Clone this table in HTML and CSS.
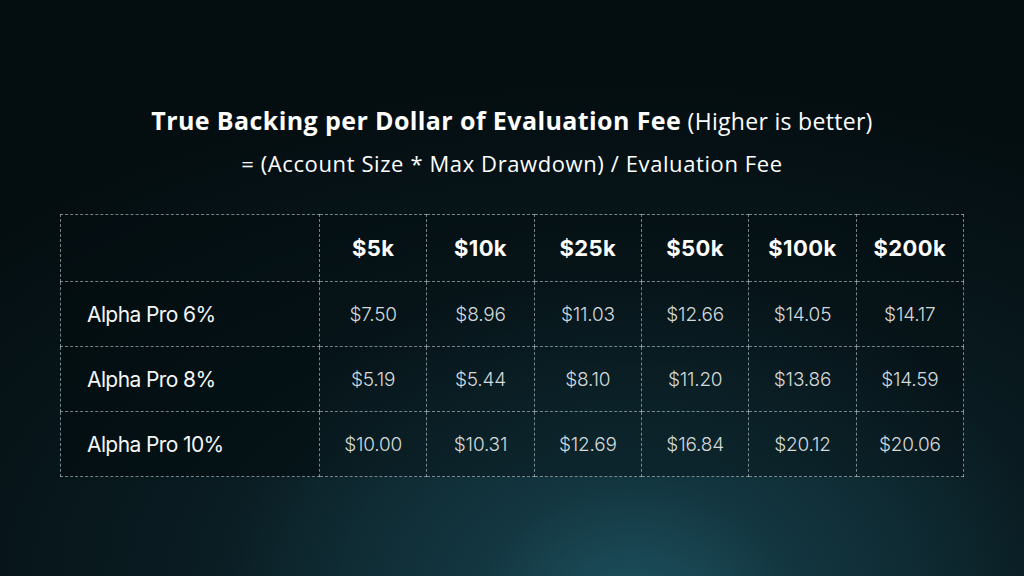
FILE: index.html
```html
<!DOCTYPE html>
<html lang="en">
<head>
<meta charset="utf-8">
<title>True Backing per Dollar of Evaluation Fee</title>
<link rel="stylesheet" href="styles.css">
</head>
<body>
<main class="page">
  <header class="heading">
    <h1 class="title"><strong>True Backing per Dollar of Evaluation Fee</strong> <span class="note">(Higher is better)</span></h1>
    <p class="formula">= (Account Size * Max Drawdown) / Evaluation Fee</p>
  </header>
  <table class="grid">
    <thead>
      <tr>
        <th class="corner"></th>
        <th>$5k</th><th>$10k</th><th>$25k</th><th>$50k</th><th>$100k</th><th>$200k</th>
      </tr>
    </thead>
    <tbody>
      <tr>
        <th class="rowname">Alpha Pro 6%</th>
        <td>$7.50</td><td>$8.96</td><td>$11.03</td><td>$12.66</td><td>$14.05</td><td>$14.17</td>
      </tr>
      <tr>
        <th class="rowname">Alpha Pro 8%</th>
        <td>$5.19</td><td>$5.44</td><td>$8.10</td><td>$11.20</td><td>$13.86</td><td>$14.59</td>
      </tr>
      <tr>
        <th class="rowname">Alpha Pro 10%</th>
        <td>$10.00</td><td>$10.31</td><td>$12.69</td><td>$16.84</td><td>$20.12</td><td>$20.06</td>
      </tr>
    </tbody>
  </table>
</main>
</body>
</html>
```

FILE: styles.css
```css
html, body {
  margin: 0;
  padding: 0;
  height: 100%;
}

body {
  width: 1024px;
  height: 576px;
  overflow: hidden;
  color: #ffffff;
  font-family: "Open Sans", "Lato", sans-serif;
  background-color: #050f12;
  background-image:
    radial-gradient(ellipse 420px 360px at 62% 108%, rgba(31, 90, 104, 0.85) 0%, rgba(22, 64, 76, 0.55) 40%, rgba(10, 30, 36, 0) 100%),
    radial-gradient(ellipse 900px 520px at 60% 100%, #123039 0%, #0a1d23 45%, #061317 75%, #040d10 100%);
}

.page {
  display: flex;
  flex-direction: column;
  align-items: center;
  padding-top: 103px;
}

.heading {
  text-align: center;
}

.title {
  margin: 0;
  font-size: 25px;
  line-height: 34px;
  font-weight: 400;
}

.title strong {
  font-weight: 700;
  letter-spacing: 0.4px;
}

.note {
  font-size: 23px;
  font-weight: 400;
  letter-spacing: 0.3px;
}

.formula {
  margin: 10px 0 0;
  font-size: 22px;
  line-height: 30px;
  font-weight: 400;
  letter-spacing: 0.6px;
}

.grid {
  margin-top: 36px;
  width: 904px;
  border-collapse: collapse;
  table-layout: fixed;
  font-family: "Inter", sans-serif;
}

.grid th,
.grid td {
  border: 1px dashed rgba(210, 220, 222, 0.55);
  text-align: center;
  padding: 0;
  background: rgba(2, 12, 14, 0.35);
}

.grid thead th {
  height: 66px;
  font-size: 22px;
  font-weight: 700;
  letter-spacing: 0.4px;
  color: #ffffff;
}

.grid .corner {
  width: 258px;
}

.grid tbody th,
.grid tbody td {
  height: 64px;
}

.grid .rowname {
  text-align: left;
  padding-left: 26px;
  font-size: 21px;
  font-weight: 400;
  letter-spacing: -0.6px;
  color: #f4f6f6;
  background: rgba(2, 12, 14, 0.6);
}

.grid td {
  font-size: 19px;
  font-weight: 300;
  letter-spacing: -0.2px;
  color: #d4d9da;
}
```
